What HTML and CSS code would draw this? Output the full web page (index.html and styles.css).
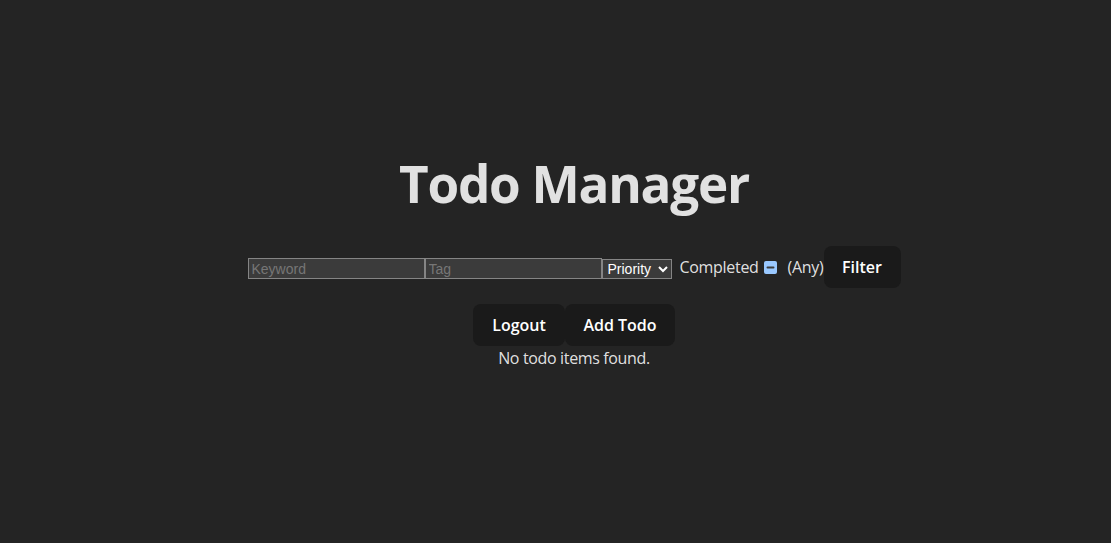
FILE: index.html
```html
<!DOCTYPE html>
<html lang="en">
<head>
<meta charset="utf-8">
<title>Todo Manager</title>
<link rel="stylesheet" href="styles.css">
</head>
<body>
<div class="app">
  <h1 class="title">Todo Manager</h1>
  <form class="filters" onsubmit="return false">
    <input class="field" type="text" placeholder="Keyword">
    <input class="field" type="text" placeholder="Tag">
    <select class="select">
      <option>Priority</option>
      <option>High</option>
      <option>Medium</option>
      <option>Low</option>
    </select>
    <label class="completed">Completed<input id="completed" class="check" type="checkbox">(Any)</label>
    <button class="btn btn-filter" type="submit">Filter</button>
  </form>
  <div class="actions">
    <button class="btn btn-logout" type="button">Logout</button>
    <button class="btn btn-add" type="button">Add Todo</button>
  </div>
  <p class="empty">No todo items found.</p>
</div>
<script src="script.js"></script>
</body>
</html>
```

FILE: styles.css
```css
:root {
  color-scheme: dark;
}
html, body {
  margin: 0;
  height: 100%;
}
body {
  background: #242424;
  color: rgba(255, 255, 255, 0.87);
  font-family: "Open Sans", "Noto Sans", sans-serif;
  font-size: 16px;
  line-height: 1.5;
}
.app {
  display: flex;
  flex-direction: column;
  align-items: center;
  padding-top: 155px;
  padding-left: 37px;
}
.title {
  margin: 0 0 35px;
  font-size: 51.2px;
  line-height: 1.1;
  font-weight: 700;
  letter-spacing: -1.25px;
  color: #e1e1e1;
}
.filters {
  display: flex;
  align-items: center;
  margin: 0;
}
.field {
  box-sizing: border-box;
  width: 177px;
  height: 21px;
  margin: 3px 0 0;
  padding: 1px 3px;
  background: #3b3b3b;
  border: 1px solid #858585;
  color: #fff;
  font-family: "Liberation Sans", Arial, sans-serif;
  font-size: 14px;
}
.field::placeholder {
  color: #767676;
}
.select {
  box-sizing: border-box;
  width: 70px;
  height: 20px;
  margin: 3px 0 0;
  padding: 0 0 0 1px;
  background: #3b3b3b;
  border: 1px solid #858585;
  color: #fff;
  font-family: "Liberation Sans", Arial, sans-serif;
  font-size: 14px;
}
.completed {
  margin-left: 8px;
  display: flex;
  align-items: center;
  letter-spacing: -0.3px;
}
.check {
  margin: 0 11px 0 5px;
  width: 13px;
  height: 13px;
}
.btn {
  box-sizing: border-box;
  height: 42px;
  border-radius: 8px;
  border: 1px solid transparent;
  padding: 0;
  font-family: inherit;
  font-size: 16px;
  font-weight: 600;
  background: #1a1a1a;
  color: #fff;
  cursor: pointer;
}
.btn-filter {
  width: 77px;
}
.btn-logout {
  width: 92px;
}
.btn-add {
  width: 110px;
}
.actions {
  display: flex;
  margin-top: 16px;
}
.empty {
  margin: 0;
  line-height: 24px;
  letter-spacing: -0.35px;
}
```

FILE: script.js
```js
document.getElementById('completed').indeterminate = true;
```
